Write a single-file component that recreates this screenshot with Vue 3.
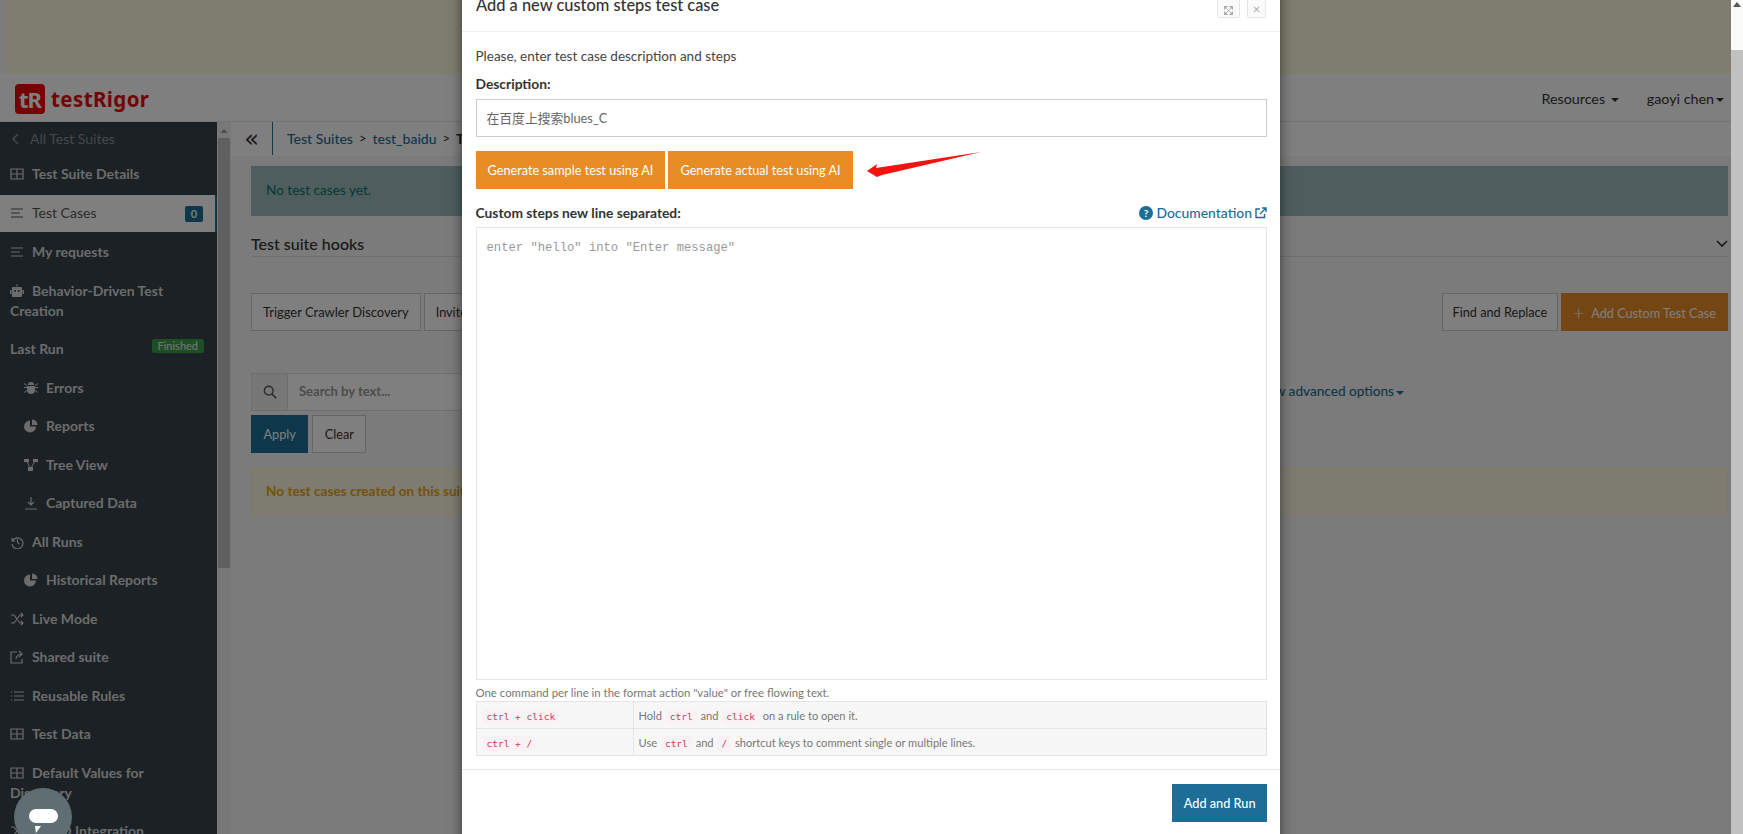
<script setup>
const sideItems = [
  { label: 'Test Suite Details', icon: 'grid', cls: 'bold' },
  { label: 'Test Cases', icon: 'bars', cls: 'active', badge: '0' },
  { label: 'My requests', icon: 'bars', cls: 'bold' },
  { label: 'Behavior-Driven Test Creation', icon: 'robot', cls: 'bold' },
  { label: 'Last Run', icon: '', cls: 'bold', status: 'Finished' },
  { label: 'Errors', icon: 'bug', cls: 'bold sub' },
  { label: 'Reports', icon: 'pie', cls: 'bold sub' },
  { label: 'Tree View', icon: 'tree', cls: 'bold sub' },
  { label: 'Captured Data', icon: 'down', cls: 'bold sub' },
  { label: 'All Runs', icon: 'history', cls: 'bold' },
  { label: 'Historical Reports', icon: 'pie', cls: 'bold sub' },
  { label: 'Live Mode', icon: 'shuffle', cls: 'bold' },
  { label: 'Shared suite', icon: 'share', cls: 'bold' },
  { label: 'Reusable Rules', icon: 'list', cls: 'bold' },
  { label: 'Test Data', icon: 'grid', cls: 'bold' },
  { label: 'Default Values for Discovery', icon: 'grid', cls: 'bold' },
  { label: 'CI/CD Integration', icon: 'shuffle', cls: 'bold' },
]
const icons = {
  grid: 'M1 2h12v10H1zM1 7h12M7 2v10',
  bars: 'M1 3h12M1 7h9M1 11h12',
  list: 'M4 3h10M4 7h10M4 11h10M1 3h1M1 7h1M1 11h1',
  shuffle: 'M1 3h3l6 8h3M1 11h3l6-8h3M11 1l2 2-2 2M11 9l2 2-2 2',
  share: 'M7 2H1v11h11V9M6 9c0-3 3-5 6-5M9 1l3 3-3 3',
  history: 'M2 3v3h3M2.500 6A5.500 5.500 0 1 1 2 9M7.500 4v3.500l2 1.500',
  down: 'M7 1v8M4 6l3 3 3-3M1 13h12',
}
const fills = {
  pie: 'M6 1.500a6 6 0 1 0 6 6H6zM8 .500v5.500h5.500A5.500 5.500 0 0 0 8 .500z',
  tree: 'M0 1h5v3H0zM9 1h5v3H9zM4 9h5v4H4zM3 4h1l2 5H5zM10 4h1L8 9H7z',
  bug: 'M4 4a3 3 0 0 1 6 0zM3 5h8v4a4 4 0 0 1-8 0zM0 6h3v1H0zM11 6h3v1h-3zM0 11l3-2v1l-3 2zM14 11l-3-2v1l3 2zM0 2l3 2v1L0 3zM14 2l-3 2v1l3-2z',
  robot: 'M6.500 0h1v2.500h-1zM3 3h8a1 1 0 0 1 1 1v8a1 1 0 0 1-1 1H3a1 1 0 0 1-1-1V4a1 1 0 0 1 1-1zM4.500 6v2h1.500V6zM8 6v2h1.500V6zM0 6h1.500v4H0zM12.500 6H14v4h-1.500z',
}
</script>

<template>
  <div class="screen">
    <div class="page">
      <div class="banner"></div>
      <header class="navbar">
        <div class="logo">
          <span class="logo-mark">tR</span><span class="logo-word">testRigor</span>
        </div>
        <nav class="nav-right">
          <span class="nav-link">Resources <i class="caret"></i></span>
          <span class="nav-link">gaoyi chen<i class="caret"></i></span>
        </nav>
      </header>
      <div class="body-row">
        <aside class="sidebar">
          <div class="side-back">
            <svg class="chev" viewBox="0 0 7 12"><path d="M6 1L1 6l5 5" fill="none" stroke="currentColor" stroke-width="1.500" /></svg>
            All Test Suites
          </div>
          <div v-for="item in sideItems" :key="item.label" class="side-item" :class="item.cls">
            <svg v-if="item.icon" class="side-icon" viewBox="0 0 14 14">
              <path v-if="icons[item.icon]" :d="icons[item.icon]" fill="none" stroke="currentColor" stroke-width="1.200" />
              <path v-else :d="fills[item.icon]" fill="currentColor" fill-rule="evenodd" />
            </svg>
            <span class="side-label">{{ item.label }}</span>
            <span v-if="item.badge" class="badge">{{ item.badge }}</span>
            <span v-if="item.status" class="status">{{ item.status }}</span>
          </div>
        </aside>
        <div class="side-scroll"><span class="scroll-up"></span><span class="scroll-thumb"></span></div>
        <main class="main">
          <div class="crumbs">
            <span class="collapse">«</span>
            <span class="crumb-links"><a>Test Suites</a><b>&gt;</b><a>test_baidu</a><b>&gt;</b><span>Test Cases</span></span>
          </div>
          <div class="content">
            <div class="alert info">No test cases yet.</div>
            <div class="hooks"><span>Test suite hooks</span>
              <svg class="hook-chev" viewBox="0 0 12 8"><path d="M1 1l5 5 5-5" fill="none" stroke="currentColor" stroke-width="1.600" /></svg>
            </div>
            <div class="actions">
              <button class="btn trigger">Trigger Crawler Discovery</button>
              <button class="btn">Invite</button>
              <span class="grow"></span>
              <button class="btn find">Find and Replace</button>
              <button class="btn orange-dim"><span class="plus">+</span>Add Custom Test Case</button>
            </div>
            <div class="search-row">
              <span class="addon">
                <svg viewBox="0 0 16 16" class="search-ico"><circle cx="6.500" cy="6.500" r="5" fill="none" stroke="currentColor" stroke-width="1.600" /><path d="M10 10l5 5" stroke="currentColor" stroke-width="1.800" /></svg>
              </span>
              <span class="search-input">Search by text...</span>
              <a class="adv">Show advanced options<i class="caret"></i></a>
            </div>
            <div class="filter-btns">
              <button class="btn primary">Apply</button>
              <button class="btn">Clear</button>
            </div>
            <div class="alert warn">No test cases created on this suite yet.</div>
          </div>
        </main>
      </div>
      <div class="dim"></div>
      <button class="chat"><span class="chat-bar"></span><span class="chat-tail"></span></button>
    </div>
    <div class="page-scroll"><span class="ps-up"></span><span class="ps-thumb"></span></div>

    <section class="modal">
      <div class="m-head">
        <h4>Add a new custom steps test case</h4>
        <div class="m-tools">
          <span class="tool wide">
            <svg viewBox="0 0 10 10"><path d="M0 0h4L0 4zM10 0H6L10 4zM0 10h4L0 6zM10 10H6L10 6zM2 2l6 6M8 2l-6 6" fill="currentColor" stroke="currentColor" stroke-width="1" /></svg>
          </span>
          <span class="tool">×</span>
        </div>
      </div>
      <div class="m-body">
        <p class="lead">Please, enter test case description and steps</p>
        <label class="lbl">Description:</label>
        <div class="field">在百度上搜索blues_C</div>
        <div class="ai-row">
          <button class="btn orange">Generate sample test using AI</button>
          <button class="btn orange">Generate actual test using AI</button>
        </div>
        <div class="steps-head">
          <label class="lbl">Custom steps new line separated:</label>
          <a class="doc">
            <svg class="doc-q" viewBox="0 0 14 14"><circle cx="7" cy="7" r="7" fill="currentColor" /><text x="7" y="10.500" text-anchor="middle" font-size="10" font-weight="700" fill="#fff" font-family="Lato, sans-serif">?</text></svg>
            Documentation
            <svg class="doc-ext" viewBox="0 0 12 12"><path d="M9.500 7v3.500h-8.500v-8.500h4M5 7l6-6M7 1h4v4" fill="none" stroke="currentColor" stroke-width="1.400" /></svg>
          </a>
        </div>
        <div class="steps">enter "hello" into "Enter message"</div>
        <p class="hint">One command per line in the format action "value" or free flowing text.</p>
        <table class="keys">
          <tbody>
            <tr>
              <td class="k"><code>ctrl + click</code></td>
              <td>Hold <code>ctrl</code> and <code>click</code> on a rule to open it.</td>
            </tr>
            <tr>
              <td class="k"><code>ctrl + /</code></td>
              <td>Use <code>ctrl</code> and <code>/</code> shortcut keys to comment single or multiple lines.</td>
            </tr>
          </tbody>
        </table>
      </div>
      <div class="m-foot"><button class="btn run">Add and Run</button></div>
      <svg class="arrow" viewBox="0 0 116 28"><path d="M1 21L11 14L10 18L115 2L16 25L11 27Z" fill="#f5130f" /></svg>
    </section>
  </div>
</template>

<style>
html, body { margin: 0; overflow: hidden; background: #fff; }
</style>

<style scoped>
.screen { position: relative; width: 1743px; height: 834px; overflow: hidden; font-family: Lato, "Noto Sans CJK SC", sans-serif; font-size: 14px; color: #333; display: flex; }
.page { position: relative; width: 1731px; height: 834px; overflow: hidden; background: #f6f6f6; flex: none; display: flex; flex-direction: column; }
.page-scroll { flex: 1; display: flex; flex-direction: column; align-items: center; background: #fafafa; }
.ps-up { margin-top: 2px; width: 0; height: 0; border: 4px solid transparent; border-top: 0; border-bottom: 5px solid #555; }
.ps-thumb { margin-top: 43px; width: 100%; flex: 1; background: #c1c1c1; }
.dim { position: absolute; inset: 0; background: rgba(0,0,0,.5); }
.banner { margin: 0 0 0 5px; height: 74px; background: #fffcdc; border-bottom-left-radius: 8px; flex: none; }
.navbar { height: 48px; flex: none; display: flex; justify-content: space-between; align-items: center; box-sizing: border-box; border-bottom: 1px solid #e7e7e7; padding: 2px 7px 0 15px; background: #fff; }
.logo { display: flex; align-items: center; }
.logo-mark { width: 30px; height: 30px; border-radius: 4px; background: #e5090c; color: #fff; font: 700 22px/30px "Noto Sans", sans-serif; letter-spacing: -1px; text-align: center; }
.logo-word { margin-left: 6px; color: #e5090c; font: 700 20.500px/30px "Noto Sans", sans-serif; letter-spacing: .4px; }
.nav-right { display: flex; gap: 28px; font-size: 14.300px; }
.caret { display: inline-block; width: 0; height: 0; border: 4px solid transparent; border-top-color: currentColor; border-bottom: 0; vertical-align: middle; margin-left: 2px; }
.body-row { flex: 1; display: flex; min-height: 0; }
.sidebar { width: 217px; flex: none; background: #364248; color: #d8d8d8; overflow: hidden; }
.side-back { height: 33px; line-height: 33px; padding-left: 12px; color: #8b9396; font-size: 14px; display: flex; align-items: center; gap: 11px; }
.chev { width: 7px; height: 12px; flex: none; }
.side-item { position: relative; padding: 9.250px 10px; line-height: 20px; font-size: 14px; }
.side-item.bold { font-weight: 700; }
.side-item.active { background: #fff; color: #555; padding: 8.800px 10px; margin: 1px 0; border-right: 2px solid #1c6e96; font-weight: 400; }
.side-item.sub { padding-left: 24px; }
.side-icon { width: 14px; height: 14px; vertical-align: -2px; margin-right: 8px; }
.badge { position: absolute; right: 12px; top: 11px; width: 18px; height: 16px; border-radius: 2px; background: #1c6e96; color: #dfe; text-align: center; font: 700 11px/16px Lato, sans-serif; }
.status { position: absolute; right: 13px; top: 9px; height: 14px; line-height: 14px; padding: 0 6px; border-radius: 2px; background: #3a9c4a; color: #e6efe6; font-size: 11px; font-weight: 400; }
.side-scroll { width: 14px; flex: none; display: flex; flex-direction: column; align-items: center; background: #f1f1f1; box-sizing: border-box; padding-top: 7px; }
.scroll-up { width: 0; height: 0; border: 4px solid transparent; border-top: 0; border-bottom: 4px solid #a3a3a3; }
.scroll-thumb { margin-top: 5px; width: 12px; height: 430px; background: #c1c1c1; }
.main { flex: 1; min-width: 0; display: flex; flex-direction: column; }
.crumbs { height: 34px; box-sizing: border-box; padding-bottom: 1px; flex: none; display: flex; align-items: center; background: #fff; }
.collapse { width: 42px; box-sizing: border-box; height: 33px; border-right: 1px solid #1c6e96; text-align: center; font: 400 24px/34px "DejaVu Sans", sans-serif; color: #333; }
.crumb-links { margin-left: 14px; display: flex; gap: 6px; font-size: 14px; font-weight: 500; white-space: nowrap; }
.crumb-links a { color: #1c6e96; }
.crumb-links b { font-weight: 400; font-size: 13px; color: #333; }
.crumb-links span { font-weight: 700; }
.content { padding: 10px 3px 0 20px; display: flex; flex-direction: column; }
.alert { box-sizing: border-box; padding: 0 14px; display: flex; align-items: center; font-size: 13.600px; }
.alert.info { height: 50px; padding-bottom: 2px; background: #9dbdbd; color: #0f6d6d; border: 1px solid #9dbdbd; }
.hooks { margin-top: 15px; height: 25px; box-sizing: content-box; border-bottom: 1px solid #ddd; display: flex; justify-content: space-between; align-items: center; font-size: 16px; font-weight: 500; color: #333; }
.hook-chev { width: 12px; height: 8px; color: #333; }
.actions { margin-top: 36px; display: flex; gap: 3px; }
.grow { flex: 1; }
.btn { height: 38px; box-sizing: border-box; padding: 0 11px; background: #fff; border: 1px solid #ccc; color: #333; font: 400 12.700px Lato, sans-serif; }
.trigger { font-size: 12.950px; }
.find { padding: 0 10px; }
.orange-dim { background: #e88d26; border-color: #e88d26; color: #fff; }
.plus { font-size: 19px; font-weight: 300; margin-right: 7px; vertical-align: -2px; }
.primary { background: #1c6e96; border-color: #1c6e96; color: #fff; }
.search-row { margin-top: 42px; height: 38px; display: flex; align-items: stretch; }
.addon { width: 37px; flex: none; background: #eee; display: flex; align-items: center; justify-content: center; color: #555; box-sizing: border-box; border: 1px solid #ddd; }
.search-ico { width: 14px; height: 14px; }
.search-input { width: 400px; box-sizing: border-box; background: #fff; border: 1px solid #ddd; border-left: 0; padding-left: 11px; line-height: 34px; font-size: 13px; font-weight: 700; color: #999; }
.adv { margin-left: auto; margin-right: 324px; line-height: 36px; font-size: 13.600px; color: #1c6e96; font-weight: 500; white-space: nowrap; }
.filter-btns { margin-top: 4px; display: flex; gap: 4px; }
.filter-btns .btn { padding: 0 11.500px; }
.alert.warn { margin-top: 14px; height: 48px; background: #fcf8e3; border: 1px solid #faf2cc; color: #e9a70f; font-weight: 700; }
.chat { position: absolute; left: 14px; top: 788px; width: 58px; height: 58px; border: 0; border-radius: 50%; padding: 0; background: #5f6e73; }
.chat-bar { position: absolute; left: 15px; top: 21px; width: 29px; height: 14px; border-radius: 7px; background: #fff; }
.chat-tail { position: absolute; left: 21px; top: 38px; width: 6px; height: 7px; background: #fff; clip-path: polygon(0 0, 100% 0, 15% 100%); }

.modal { position: absolute; left: 462px; top: -28px; width: 818px; height: 880px; background: #fff; box-shadow: 0 0 12px rgba(0,0,0,.55); display: flex; flex-direction: column; }
.m-head { height: 60px; flex: none; box-sizing: border-box; border-bottom: 1px solid #eee; padding: 21px 14px 0; display: flex; justify-content: space-between; }
.m-head h4 { margin: 0; font-size: 16.400px; line-height: 24px; font-weight: 500; color: #333; }
.m-tools { display: flex; gap: 7px; }
.tool { width: 19px; height: 22px; margin-top: 3px; box-sizing: border-box; border: 1px solid #e6e6e6; border-radius: 2px; background: #fafafa; color: #aaa; text-align: center; line-height: 24px; font-size: 13px; }
.tool.wide { width: 23px; display: flex; align-items: center; justify-content: center; padding-top: 6px; }
.tool.wide svg { width: 9px; height: 9px; }
.m-body { padding: 14px 13px 0 13.500px; flex: none; }
.lead { margin: 0; height: 20px; line-height: 20px; font-size: 13.500px; color: #444; }
.lbl { display: block; margin: 8px 0 0; height: 20px; line-height: 20px; font-weight: 700; font-size: 13.800px; color: #333; }
.field { margin-top: 5px; height: 38px; box-sizing: border-box; border: 1px solid #ccc; padding: 0 10px; line-height: 36px; font-size: 12.800px; color: #666; }
.ai-row { margin-top: 14px; display: flex; gap: 3px; }
.orange { background: #e88d26; border-color: #e88d26; color: #fff; height: 38px; padding: 0 11px; }
.steps-head { margin-top: 6px; display: flex; justify-content: space-between; align-items: flex-end; height: 30px; box-sizing: border-box; padding-bottom: 2px; }
.doc { color: #1c6e96; font-size: 13.900px; line-height: 20px; font-weight: 500; display: flex; align-items: center; gap: 3px; }
.doc-q { width: 14px; height: 14px; margin-right: 1px; }
.doc-ext { width: 12px; height: 12px; }
.steps { margin-top: 2px; height: 453px; box-sizing: border-box; border: 1px solid #e6e6e6; padding: 12px 10px; font: 12.200px/16px "Liberation Mono", monospace; color: #999; }
.hint { margin: 4px 0 0; height: 17px; line-height: 17px; font-size: 11.400px; color: #777; }
.keys { width: 100%; border-collapse: collapse; background: #f7f7f7; margin-top: 0; font-size: 11.100px; color: #777; }
.keys td { height: 27px; padding: 0 5px; border: 1px solid #e4e4e4; box-sizing: border-box; }
.keys .k { width: 157px; }
code { font: 9.500px "DejaVu Sans Mono", monospace; color: #d4365f; background: #f9f2f4; padding: 2px 4px; margin: 0 1px; border-radius: 2px; }
.m-foot { margin-top: 13px; border-top: 1px solid #e6e6e6; padding: 14px 13px 0; display: flex; justify-content: flex-end; }
.run { background: #1c6e96; border-color: #1c6e96; color: #fff; height: 38px; padding: 0 10.500px; font-weight: 500; }
.arrow { position: absolute; left: 404px; top: 178px; width: 116px; height: 28px; }
</style>
